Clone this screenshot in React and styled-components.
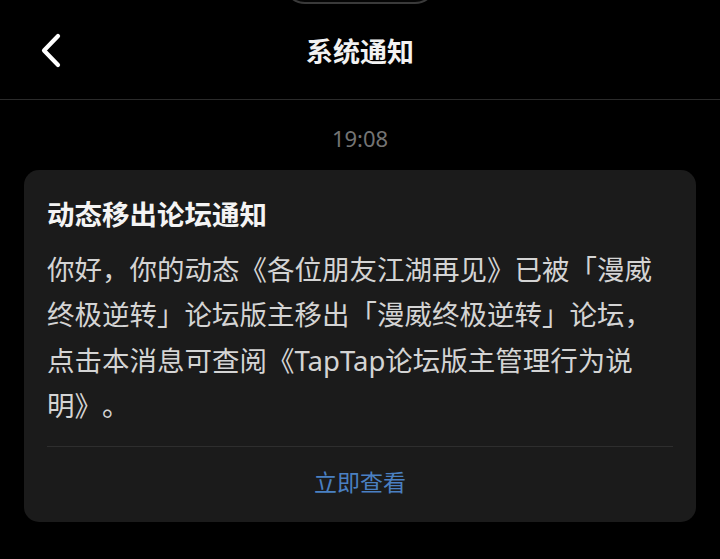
import React from "react";
import styled, { createGlobalStyle } from "styled-components";

const Global = createGlobalStyle`
  html, body { margin: 0; padding: 0; background: #000; }
  body {
    font-family: "Noto Sans", "Noto Sans CJK SC", sans-serif;
    -webkit-font-smoothing: antialiased;
  }
  * { box-sizing: border-box; }
`;

const Screen = styled.div`
  position: relative;
  width: 720px;
  height: 559px;
  background: #000;
  overflow: hidden;
  display: flex;
  flex-direction: column;
`;

const Island = styled.div`
  position: absolute;
  left: 283px;
  top: -40px;
  width: 154px;
  height: 44px;
  border: 2px solid #3a3a3a;
  border-radius: 22px;
  background: #050505;
`;

const Header = styled.header`
  height: 100px;
  border-bottom: 1px solid #2b2b2b;
  display: grid;
  grid-template-columns: 1fr auto 1fr;
  align-items: center;
  padding: 3px 38px 0;
`;

const BackButton = styled.button`
  justify-self: start;
  width: 28px;
  height: 40px;
  padding: 0;
  border: none;
  background: none;
  display: flex;
  align-items: center;
  justify-content: center;
`;

const Title = styled.h1`
  margin: 0;
  font-family: "Noto Sans CJK SC", sans-serif;
  font-size: 27px;
  font-weight: 700;
  color: #f2f2f2;
  line-height: 36px;
`;

const Time = styled.div`
  margin-top: 23px;
  text-align: center;
  font-family: "Noto Sans", "Roboto", sans-serif;
  font-size: 22px;
  line-height: 30px;
  color: #747474;
`;

const Card = styled.section`
  margin: 17px 24px 0;
  background: #1b1b1b;
  border-radius: 15px;
  padding: 25px 23px 0;
  display: flex;
  flex-direction: column;
`;

const CardTitle = styled.h2`
  margin: 0;
  font-family: "Noto Sans CJK SC", sans-serif;
  font-size: 27.5px;
  font-weight: 700;
  line-height: 36px;
  color: #f4f4f4;
`;

const Body = styled.p`
  margin: 16px 0 0;
  font-family: "Noto Sans", "Noto Sans CJK SC", sans-serif;
  font-size: 27.5px;
  line-height: 45.3px;
  color: #d4d4d4;
  line-break: strict;
  text-spacing-trim: space-all;
`;

const Divider = styled.hr`
  margin: 18px 0 0;
  border: none;
  height: 1px;
  background: #2e2e2e;
`;

const Action = styled.button`
  height: 75px;
  border: none;
  background: none;
  padding: 0 0 7px;
  font-family: "Noto Sans CJK SC", sans-serif;
  font-size: 23px;
  color: #4a80c2;
  display: flex;
  align-items: center;
  justify-content: center;
`;

export default function App() {
  return (
    <>
      <Global />
      <Screen>
        <Island />
        <Header>
          <BackButton aria-label="返回">
            <svg width="24" height="38" viewBox="0 0 24 38" fill="none">
              <path
                d="M18 4 L4 18.5 L18 33"
                stroke="#fff"
                strokeWidth="4.2"
                strokeLinecap="round"
                strokeLinejoin="round"
              />
            </svg>
          </BackButton>
          <Title>系统通知</Title>
          <span />
        </Header>
        <Time>19:08</Time>
        <Card>
          <CardTitle>动态移出论坛通知</CardTitle>
          <Body>
            你好，你的动态《各位朋友江湖再见》已被「漫威终极逆转」论坛版主移出「漫威终极逆转」论坛，点击本消息可查阅《TapTap论坛版主管理行为说明》。
          </Body>
          <Divider />
          <Action>立即查看</Action>
        </Card>
      </Screen>
    </>
  );
}
